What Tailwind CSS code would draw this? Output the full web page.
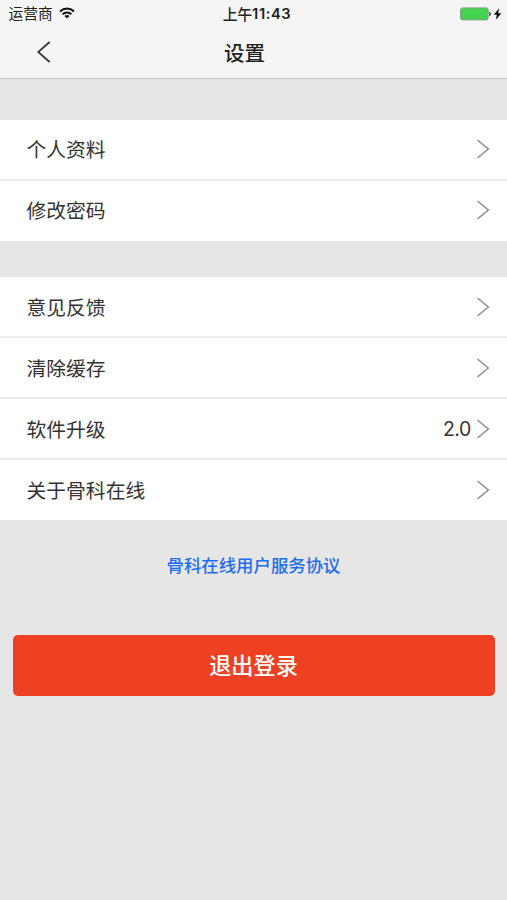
<!DOCTYPE html>
<html lang="zh-CN">
<head>
<meta charset="utf-8">
<title>设置</title>
<script src="https://cdn.jsdelivr.net/npm/@tailwindcss/browser@4"></script>
</head>
<body class="bg-[#e6e6e6]">
<div class="w-[507px] h-[900px] overflow-hidden flex flex-col bg-[#e6e6e6] font-['Noto_Sans_CJK_SC',sans-serif] text-[#333]">
  <header class="h-[79px] shrink-0 bg-[#f5f5f5] border-b border-[#c8c8c8]">
    <div class="h-7 grid grid-cols-3 items-center text-[#222]">
      <div class="flex items-center pl-[8.5px] gap-[6px]">
        <span class="text-[14.7px] leading-[26px] pb-[2px]">运营商</span>
        <svg class="w-4 h-3 -mt-[3px]" viewBox="0 0 16 12" fill="none" stroke="#111" stroke-width="2"><path d="M1 4.4a10.2 10.2 0 0 1 14 0M3.6 7.2a6.3 6.3 0 0 1 8.8 0"/><path d="M8 11.6 5.4 9.1a3.8 3.8 0 0 1 5.2 0Z" fill="#111" stroke="none"/></svg>
      </div>
      <div class="flex justify-center items-center text-[14.7px] leading-7 font-medium pl-[7px]"><span>上午</span><span class="font-['Inter',sans-serif] font-semibold text-[14.7px] tracking-[0.6px]">11:43</span></div>
      <div class="flex justify-end items-center pr-[5px] -mt-px">
        <svg class="w-[42px] h-[14px]" viewBox="0 0 42 14"><rect x=".6" y=".9" width="27.6" height="12" rx="2" fill="#43d351" stroke="#8b9b8c"/><path d="M29.2 5h.8q1 .3 1 2t-1 2h-.8Z" fill="#555"/><path d="M39 1.2 33.9 7.7H36.8L35.8 12.7 41.4 6.2H38.2Z" fill="#111"/></svg>
      </div>
    </div>
    <div class="h-[50px] grid grid-cols-3 items-center">
      <svg class="w-[14px] h-[22px] ml-[37px] -mt-[3px]" viewBox="0 0 14 22" fill="none" stroke="#333" stroke-width="1.7"><path d="M12.6 1 1.2 11 12.6 21"/></svg>
      <h1 class="pr-[18px] text-center text-[20.5px] leading-[48px] pb-0.5 font-medium text-[#222]">设置</h1>
    </div>
  </header>

  <section class="mt-[40.5px] h-[121px] shrink-0 bg-white flex flex-col">
    <div class="h-[61px] shrink-0 border-b-2 border-[#ededed] flex items-center justify-between pl-[26.5px] pr-[17px]">
      <span class="text-[19.8px] leading-[58px] pb-px">个人资料</span>
      <svg class="w-[14px] h-5" viewBox="0 0 14 20" fill="none" stroke="#909090" stroke-width="1.6"><path d="M1.5 1 12.3 10 1.5 19"/></svg>
    </div>
    <div class="h-[60px] shrink-0 flex items-center justify-between pl-[26.5px] pr-[17px]">
      <span class="text-[19.8px] leading-[58px] pb-px">修改密码</span>
      <svg class="w-[14px] h-5 -mt-[2px]" viewBox="0 0 14 20" fill="none" stroke="#909090" stroke-width="1.6"><path d="M1.5 1 12.3 10 1.5 19"/></svg>
    </div>
  </section>

  <section class="mt-[36.5px] h-[243.4px] shrink-0 bg-white flex flex-col">
    <div class="h-[61px] shrink-0 border-b-2 border-[#ededed] flex items-center justify-between pl-[26.5px] pr-[17px]">
      <span class="text-[19.8px] leading-[59px]">意见反馈</span>
      <svg class="w-[14px] h-5" viewBox="0 0 14 20" fill="none" stroke="#909090" stroke-width="1.6"><path d="M1.5 1 12.3 10 1.5 19"/></svg>
    </div>
    <div class="h-[61px] shrink-0 border-b-2 border-[#ededed] flex items-center justify-between pl-[26.5px] pr-[17px]">
      <span class="text-[19.8px] leading-[59px]">清除缓存</span>
      <svg class="w-[14px] h-5" viewBox="0 0 14 20" fill="none" stroke="#909090" stroke-width="1.6"><path d="M1.5 1 12.3 10 1.5 19"/></svg>
    </div>
    <div class="h-[61px] shrink-0 border-b-2 border-[#ededed] flex items-center pl-[26.5px] pr-[17px]">
      <span class="text-[19.8px] leading-[59px]">软件升级</span>
      <span class="ml-auto mr-[5px] pt-[2px] text-[19.5px] leading-[57px] tracking-[-0.4px] font-['Inter',sans-serif]">2.0</span>
      <svg class="w-[14px] h-5" viewBox="0 0 14 20" fill="none" stroke="#909090" stroke-width="1.6"><path d="M1.5 1 12.3 10 1.5 19"/></svg>
    </div>
    <div class="h-[60.4px] shrink-0 flex items-center justify-between pl-[26.5px] pr-[17px]">
      <span class="text-[19.8px] leading-[58px] pb-px">关于骨科在线</span>
      <svg class="w-[14px] h-5" viewBox="0 0 14 20" fill="none" stroke="#909090" stroke-width="1.6"><path d="M1.5 1 12.3 10 1.5 19"/></svg>
    </div>
  </section>

  <a class="mt-[28.6px] h-8 shrink-0 text-center text-[17.4px] leading-8 font-medium text-[#1d6df0]">骨科在线用户服务协议</a>

  <button class="mt-[54px] mx-[13px] w-[482px] h-[61px] shrink-0 rounded-[5px] bg-[#ee4023] text-white text-[22.2px] leading-[59px] pb-[2px] pr-px font-medium">退出登录</button>
</div>
</body>
</html>
